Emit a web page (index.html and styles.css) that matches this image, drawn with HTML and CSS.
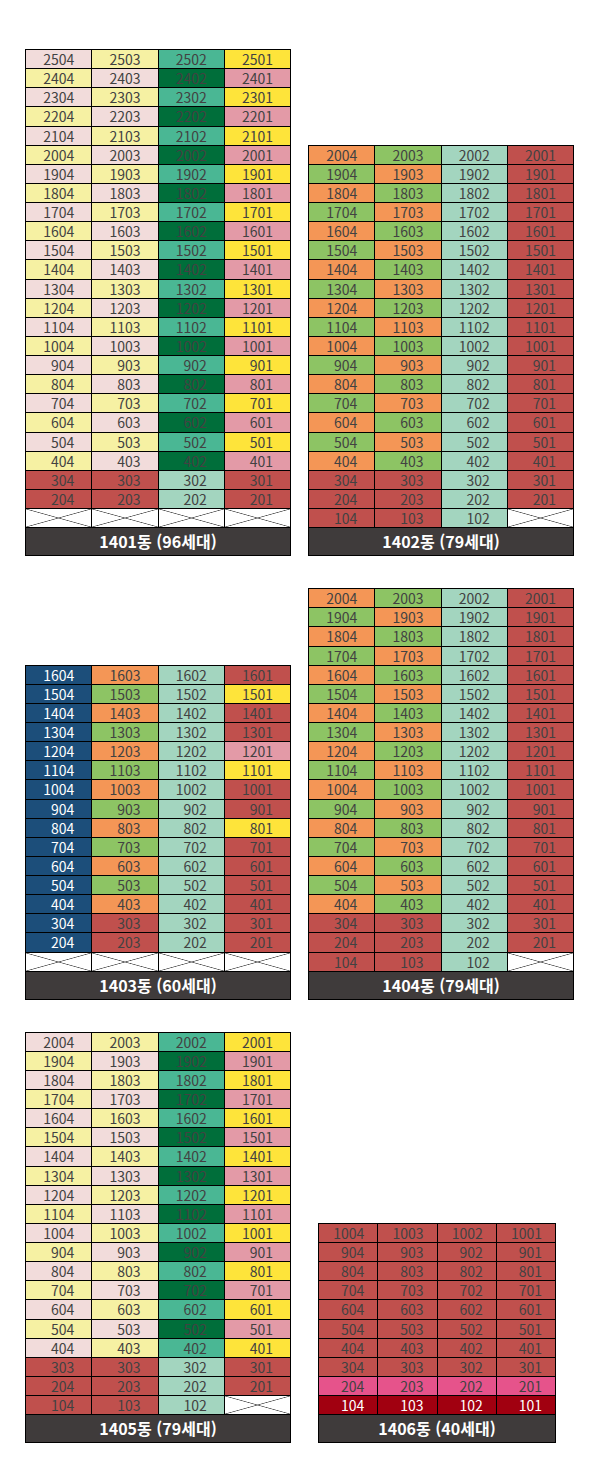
FILE: index.html
```html
<!DOCTYPE html>
<html lang="ko">
<head>
<meta charset="utf-8">
<title>동별 세대 배치</title>
<link rel="stylesheet" href="styles.css">
</head>
<body>
<main class="sheet">
  <section class="pair">
    <div class="bldg">
      <div class="grid">
        <div class="p">2504</div><div class="ly">2503</div><div class="tl">2502</div><div class="y">2501</div>
        <div class="ly">2404</div><div class="p">2403</div><div class="dg">2402</div><div class="rs">2401</div>
        <div class="p">2304</div><div class="ly">2303</div><div class="tl">2302</div><div class="y">2301</div>
        <div class="ly">2204</div><div class="p">2203</div><div class="dg">2202</div><div class="rs">2201</div>
        <div class="p">2104</div><div class="ly">2103</div><div class="tl">2102</div><div class="y">2101</div>
        <div class="ly">2004</div><div class="p">2003</div><div class="dg">2002</div><div class="rs">2001</div>
        <div class="p">1904</div><div class="ly">1903</div><div class="tl">1902</div><div class="y">1901</div>
        <div class="ly">1804</div><div class="p">1803</div><div class="dg">1802</div><div class="rs">1801</div>
        <div class="p">1704</div><div class="ly">1703</div><div class="tl">1702</div><div class="y">1701</div>
        <div class="ly">1604</div><div class="p">1603</div><div class="dg">1602</div><div class="rs">1601</div>
        <div class="p">1504</div><div class="ly">1503</div><div class="tl">1502</div><div class="y">1501</div>
        <div class="ly">1404</div><div class="p">1403</div><div class="dg">1402</div><div class="rs">1401</div>
        <div class="p">1304</div><div class="ly">1303</div><div class="tl">1302</div><div class="y">1301</div>
        <div class="ly">1204</div><div class="p">1203</div><div class="dg">1202</div><div class="rs">1201</div>
        <div class="p">1104</div><div class="ly">1103</div><div class="tl">1102</div><div class="y">1101</div>
        <div class="ly">1004</div><div class="p">1003</div><div class="dg">1002</div><div class="rs">1001</div>
        <div class="p">904</div><div class="ly">903</div><div class="tl">902</div><div class="y">901</div>
        <div class="ly">804</div><div class="p">803</div><div class="dg">802</div><div class="rs">801</div>
        <div class="p">704</div><div class="ly">703</div><div class="tl">702</div><div class="y">701</div>
        <div class="ly">604</div><div class="p">603</div><div class="dg">602</div><div class="rs">601</div>
        <div class="p">504</div><div class="ly">503</div><div class="tl">502</div><div class="y">501</div>
        <div class="ly">404</div><div class="p">403</div><div class="dg">402</div><div class="rs">401</div>
        <div class="r">304</div><div class="r">303</div><div class="m">302</div><div class="r">301</div>
        <div class="r">204</div><div class="r">203</div><div class="m">202</div><div class="r">201</div>
        <div class="x"></div><div class="x"></div><div class="x"></div><div class="x"></div>
      </div>
      <div class="label">1401동 (96세대)</div>
    </div>
    <div class="bldg">
      <div class="grid">
        <div class="o">2004</div><div class="g">2003</div><div class="m">2002</div><div class="r">2001</div>
        <div class="g">1904</div><div class="o">1903</div><div class="m">1902</div><div class="r">1901</div>
        <div class="o">1804</div><div class="g">1803</div><div class="m">1802</div><div class="r">1801</div>
        <div class="g">1704</div><div class="o">1703</div><div class="m">1702</div><div class="r">1701</div>
        <div class="o">1604</div><div class="g">1603</div><div class="m">1602</div><div class="r">1601</div>
        <div class="g">1504</div><div class="o">1503</div><div class="m">1502</div><div class="r">1501</div>
        <div class="o">1404</div><div class="g">1403</div><div class="m">1402</div><div class="r">1401</div>
        <div class="g">1304</div><div class="o">1303</div><div class="m">1302</div><div class="r">1301</div>
        <div class="o">1204</div><div class="g">1203</div><div class="m">1202</div><div class="r">1201</div>
        <div class="g">1104</div><div class="o">1103</div><div class="m">1102</div><div class="r">1101</div>
        <div class="o">1004</div><div class="g">1003</div><div class="m">1002</div><div class="r">1001</div>
        <div class="g">904</div><div class="o">903</div><div class="m">902</div><div class="r">901</div>
        <div class="o">804</div><div class="g">803</div><div class="m">802</div><div class="r">801</div>
        <div class="g">704</div><div class="o">703</div><div class="m">702</div><div class="r">701</div>
        <div class="o">604</div><div class="g">603</div><div class="m">602</div><div class="r">601</div>
        <div class="g">504</div><div class="o">503</div><div class="m">502</div><div class="r">501</div>
        <div class="o">404</div><div class="g">403</div><div class="m">402</div><div class="r">401</div>
        <div class="r">304</div><div class="r">303</div><div class="m">302</div><div class="r">301</div>
        <div class="r">204</div><div class="r">203</div><div class="m">202</div><div class="r">201</div>
        <div class="r">104</div><div class="r">103</div><div class="m">102</div><div class="x"></div>
      </div>
      <div class="label">1402동 (79세대)</div>
    </div>
  </section>

  <section class="pair">
    <div class="bldg">
      <div class="grid">
        <div class="b">1604</div><div class="o">1603</div><div class="m">1602</div><div class="r">1601</div>
        <div class="b">1504</div><div class="g">1503</div><div class="m">1502</div><div class="y">1501</div>
        <div class="b">1404</div><div class="o">1403</div><div class="m">1402</div><div class="r">1401</div>
        <div class="b">1304</div><div class="g">1303</div><div class="m">1302</div><div class="r">1301</div>
        <div class="b">1204</div><div class="o">1203</div><div class="m">1202</div><div class="rs">1201</div>
        <div class="b">1104</div><div class="g">1103</div><div class="m">1102</div><div class="y">1101</div>
        <div class="b">1004</div><div class="o">1003</div><div class="m">1002</div><div class="r">1001</div>
        <div class="b">904</div><div class="g">903</div><div class="m">902</div><div class="r">901</div>
        <div class="b">804</div><div class="o">803</div><div class="m">802</div><div class="y">801</div>
        <div class="b">704</div><div class="g">703</div><div class="m">702</div><div class="r">701</div>
        <div class="b">604</div><div class="o">603</div><div class="m">602</div><div class="r">601</div>
        <div class="b">504</div><div class="g">503</div><div class="m">502</div><div class="r">501</div>
        <div class="b">404</div><div class="o">403</div><div class="m">402</div><div class="r">401</div>
        <div class="b">304</div><div class="r">303</div><div class="m">302</div><div class="r">301</div>
        <div class="b">204</div><div class="r">203</div><div class="m">202</div><div class="r">201</div>
        <div class="x"></div><div class="x"></div><div class="x"></div><div class="x"></div>
      </div>
      <div class="label">1403동 (60세대)</div>
    </div>
    <div class="bldg">
      <div class="grid">
        <div class="o">2004</div><div class="g">2003</div><div class="m">2002</div><div class="r">2001</div>
        <div class="g">1904</div><div class="o">1903</div><div class="m">1902</div><div class="r">1901</div>
        <div class="o">1804</div><div class="g">1803</div><div class="m">1802</div><div class="r">1801</div>
        <div class="g">1704</div><div class="o">1703</div><div class="m">1702</div><div class="r">1701</div>
        <div class="o">1604</div><div class="g">1603</div><div class="m">1602</div><div class="r">1601</div>
        <div class="g">1504</div><div class="o">1503</div><div class="m">1502</div><div class="r">1501</div>
        <div class="o">1404</div><div class="g">1403</div><div class="m">1402</div><div class="r">1401</div>
        <div class="g">1304</div><div class="o">1303</div><div class="m">1302</div><div class="r">1301</div>
        <div class="o">1204</div><div class="g">1203</div><div class="m">1202</div><div class="r">1201</div>
        <div class="g">1104</div><div class="o">1103</div><div class="m">1102</div><div class="r">1101</div>
        <div class="o">1004</div><div class="g">1003</div><div class="m">1002</div><div class="r">1001</div>
        <div class="g">904</div><div class="o">903</div><div class="m">902</div><div class="r">901</div>
        <div class="o">804</div><div class="g">803</div><div class="m">802</div><div class="r">801</div>
        <div class="g">704</div><div class="o">703</div><div class="m">702</div><div class="r">701</div>
        <div class="o">604</div><div class="g">603</div><div class="m">602</div><div class="r">601</div>
        <div class="g">504</div><div class="o">503</div><div class="m">502</div><div class="r">501</div>
        <div class="o">404</div><div class="g">403</div><div class="m">402</div><div class="r">401</div>
        <div class="r">304</div><div class="r">303</div><div class="m">302</div><div class="r">301</div>
        <div class="r">204</div><div class="r">203</div><div class="m">202</div><div class="r">201</div>
        <div class="r">104</div><div class="r">103</div><div class="m">102</div><div class="x"></div>
      </div>
      <div class="label">1404동 (79세대)</div>
    </div>
  </section>

  <section class="pair">
    <div class="bldg">
      <div class="grid">
        <div class="p">2004</div><div class="ly">2003</div><div class="tl">2002</div><div class="y">2001</div>
        <div class="ly">1904</div><div class="p">1903</div><div class="dg">1902</div><div class="rs">1901</div>
        <div class="p">1804</div><div class="ly">1803</div><div class="tl">1802</div><div class="y">1801</div>
        <div class="ly">1704</div><div class="p">1703</div><div class="dg">1702</div><div class="rs">1701</div>
        <div class="p">1604</div><div class="ly">1603</div><div class="tl">1602</div><div class="y">1601</div>
        <div class="ly">1504</div><div class="p">1503</div><div class="dg">1502</div><div class="rs">1501</div>
        <div class="p">1404</div><div class="ly">1403</div><div class="tl">1402</div><div class="y">1401</div>
        <div class="ly">1304</div><div class="p">1303</div><div class="dg">1302</div><div class="rs">1301</div>
        <div class="p">1204</div><div class="ly">1203</div><div class="tl">1202</div><div class="y">1201</div>
        <div class="ly">1104</div><div class="p">1103</div><div class="dg">1102</div><div class="rs">1101</div>
        <div class="p">1004</div><div class="ly">1003</div><div class="tl">1002</div><div class="y">1001</div>
        <div class="ly">904</div><div class="p">903</div><div class="dg">902</div><div class="rs">901</div>
        <div class="p">804</div><div class="ly">803</div><div class="tl">802</div><div class="y">801</div>
        <div class="ly">704</div><div class="p">703</div><div class="dg">702</div><div class="rs">701</div>
        <div class="p">604</div><div class="ly">603</div><div class="tl">602</div><div class="y">601</div>
        <div class="ly">504</div><div class="p">503</div><div class="dg">502</div><div class="rs">501</div>
        <div class="p">404</div><div class="ly">403</div><div class="tl">402</div><div class="y">401</div>
        <div class="r">303</div><div class="r">303</div><div class="m">302</div><div class="r">301</div>
        <div class="r">204</div><div class="r">203</div><div class="m">202</div><div class="r">201</div>
        <div class="r">104</div><div class="r">103</div><div class="m">102</div><div class="x"></div>
      </div>
      <div class="label">1405동 (79세대)</div>
    </div>
    <div class="bldg small">
      <div class="grid">
        <div class="r">1004</div><div class="r">1003</div><div class="r">1002</div><div class="r">1001</div>
        <div class="r">904</div><div class="r">903</div><div class="r">902</div><div class="r">901</div>
        <div class="r">804</div><div class="r">803</div><div class="r">802</div><div class="r">801</div>
        <div class="r">704</div><div class="r">703</div><div class="r">702</div><div class="r">701</div>
        <div class="r">604</div><div class="r">603</div><div class="r">602</div><div class="r">601</div>
        <div class="r">504</div><div class="r">503</div><div class="r">502</div><div class="r">501</div>
        <div class="r">404</div><div class="r">403</div><div class="r">402</div><div class="r">401</div>
        <div class="r">304</div><div class="r">303</div><div class="r">302</div><div class="r">301</div>
        <div class="hp">204</div><div class="hp">203</div><div class="hp">202</div><div class="hp">201</div>
        <div class="dr">104</div><div class="dr">103</div><div class="dr">102</div><div class="dr">101</div>
      </div>
      <div class="label">1406동 (40세대)</div>
    </div>
  </section>
</main>
</body>
</html>
```
FILE: styles.css
```css
* { box-sizing: border-box; }

body {
  margin: 0;
  background: #ffffff;
  font-family: "Noto Sans CJK KR", "Noto Sans", sans-serif;
}

.sheet {
  width: 600px;
  height: 1471px;
  padding: 49px 0 0 25px;
  display: flex;
  flex-direction: column;
  gap: 32px;
}

.pair {
  display: flex;
  align-items: flex-end;
  gap: 17px;
}

.bldg { width: 266px; }
.bldg.small { width: 238px; margin-left: 10px; }

.grid {
  display: grid;
  grid-template-columns: repeat(4, 1fr);
  grid-auto-rows: 19.14px;
  border-top: 1px solid #000;
  border-left: 1px solid #000;
}

.grid > div {
  border-right: 1px solid #000;
  border-bottom: 1px solid #000;
  font-size: 14px;
  line-height: 18px;
  text-align: right;
  padding-right: 17px;
  color: #424242;
  white-space: nowrap;
}

.small .grid > div { padding-right: 13px; }

.label {
  height: 28px;
  border: 1px solid #000;
  border-top: 0;
  background: #3f3b3b;
  color: #ffffff;
  font-weight: 700;
  font-size: 16px;
  line-height: 27px;
  text-align: center;
}

/* cell colours */
.p  { background: #f2dcdb; }
.ly { background: #f6f1a3; }
.tl { background: #4ab794; }
.dg { background: #006e3a; }
.y  { background: #fee43a; }
.rs { background: #e39aa7; }
.r  { background: #c0504d; }
.m  { background: #a3d5bf; }
.o  { background: #f49656; }
.g  { background: #8dc464; }
.b  { background: #1c4e7a; color: #ffffff !important; }
.hp { background: #e6538b; }
.dr { background: #a10010; color: #ffffff !important; }

.x {
  background:
    linear-gradient(to bottom right, transparent calc(50% - 0.7px), #555 50%, transparent calc(50% + 0.7px)),
    linear-gradient(to top right, transparent calc(50% - 0.7px), #555 50%, transparent calc(50% + 0.7px)),
    #ffffff;
}
```
